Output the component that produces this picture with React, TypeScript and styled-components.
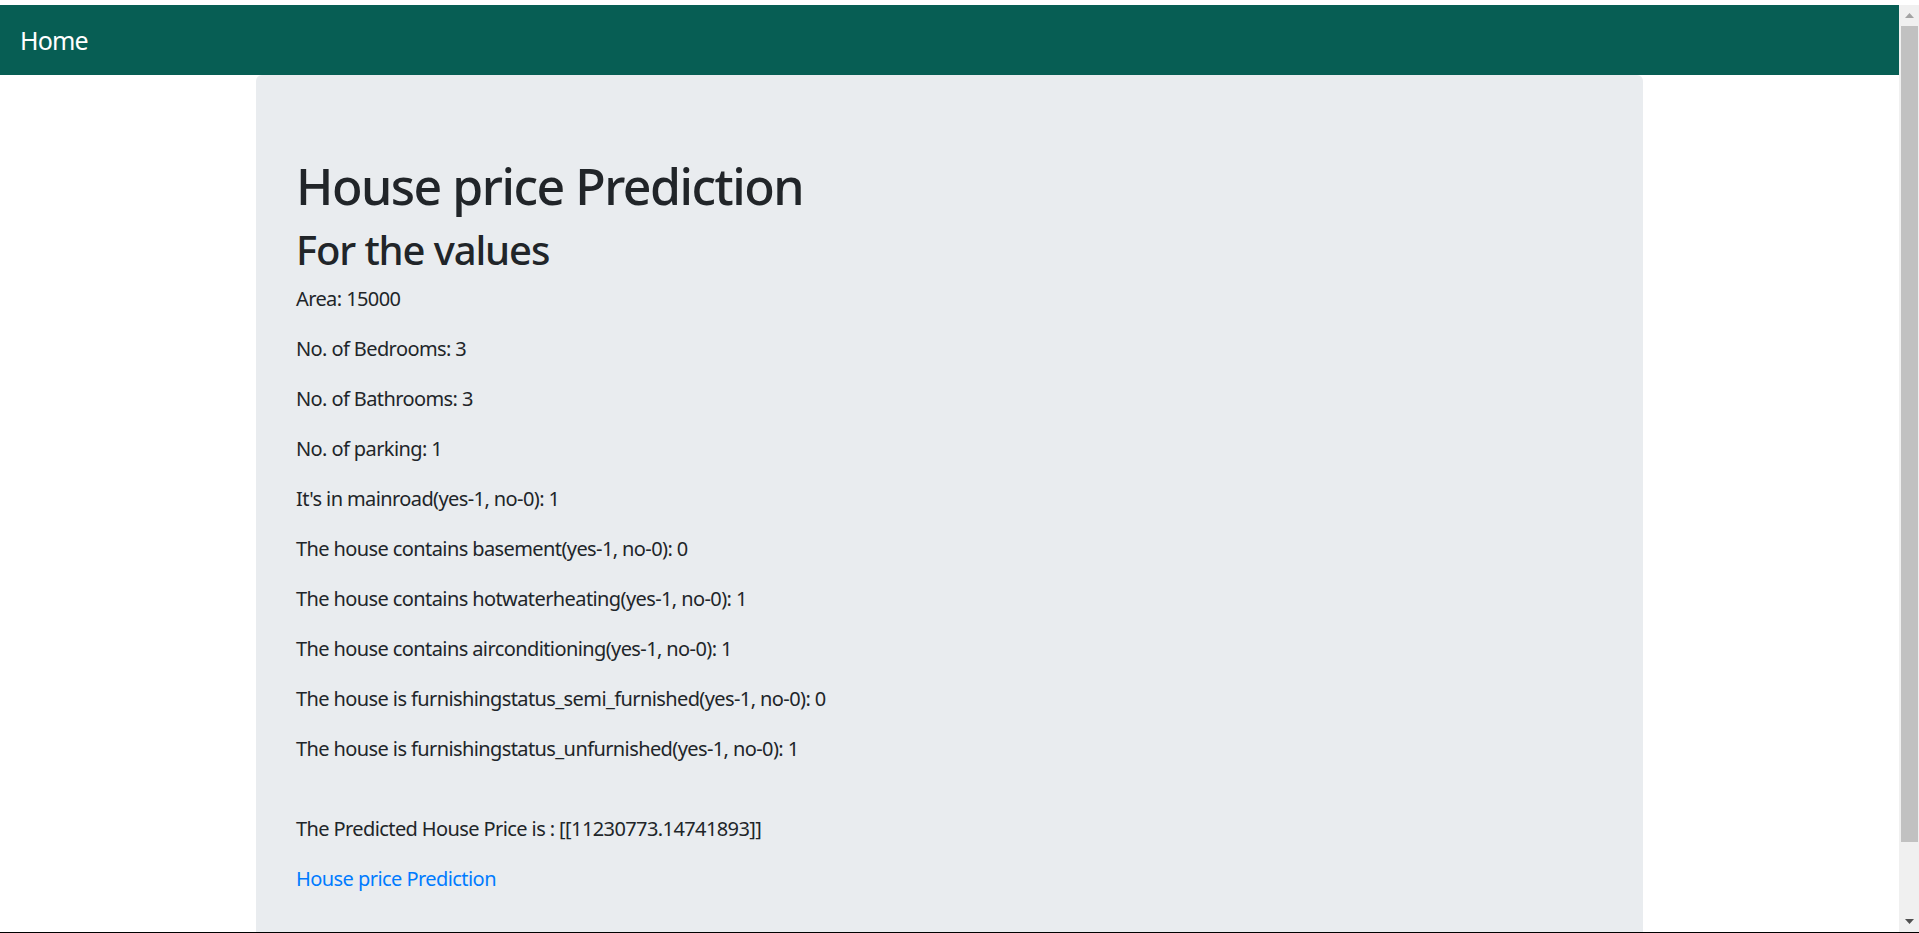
import React from "react";
import styled, { createGlobalStyle } from "styled-components";

const GlobalStyle = createGlobalStyle`
  html, body {
    margin: 0;
    padding: 0;
    height: 100%;
    overflow: hidden;
    background: #ffffff;
  }
  body {
    font-family: "Noto Sans", "Open Sans", Arial, sans-serif;
    color: #212529;
    letter-spacing: -0.024em;
  }
  * { box-sizing: border-box; }
`;

const Screen = styled.div`
  height: 100vh;
  display: flex;
  flex-direction: column;
  padding-top: 5px;
  border-bottom: 1px solid #000000;
`;

const Viewport = styled.div`
  flex: 1;
  min-height: 0;
  display: flex;
`;

const Page = styled.div`
  flex: 1;
  min-width: 0;
  overflow: hidden;
  display: flex;
  flex-direction: column;
`;

const Navbar = styled.nav`
  height: 70px;
  flex: none;
  background: #075e54;
  display: flex;
  align-items: center;
  padding: 2px 20px 0;
`;

const Brand = styled.a`
  color: #ffffff;
  font-size: 25px;
  line-height: 37.5px;
  letter-spacing: -0.035em;
  text-decoration: none;
`;

const Container = styled.main`
  width: 1387px;
  margin: 0 auto;
  flex: 1;
  display: flex;
  flex-direction: column;
`;

const Jumbotron = styled.section`
  flex: 1;
  background: #e9ecef;
  border-radius: 6px;
  padding: 81px 40px 80px;
`;

const Title = styled.h1`
  margin: 0 0 10px;
  font-size: 50px;
  line-height: 60px;
  font-weight: 500;
  letter-spacing: -0.03em;
`;

const Subtitle = styled.h2`
  margin: 0 0 10px;
  font-size: 40px;
  line-height: 48px;
  font-weight: 500;
  letter-spacing: -0.028em;
`;

const Field = styled.p`
  margin: 0 0 20px;
  font-size: 20px;
  line-height: 30px;
  letter-spacing: -0.03em;
`;

const Gap = styled.div`
  height: 30px;
`;

const BackLink = styled.a`
  color: #007bff;
  text-decoration: none;
  letter-spacing: -0.028em;
`;

const Scrollbar = styled.div`
  width: 20px;
  flex: none;
  background: #f0f0f0;
  display: flex;
  flex-direction: column;
`;

const ScrollButton = styled.div`
  height: 21px;
  flex: none;
  display: flex;
  align-items: center;
  justify-content: center;
`;

const Thumb = styled.div`
  height: 816px;
  flex: none;
  margin: 0 1px 0 2px;
  background: #c1c1c1;
`;

const TrackRest = styled.div`
  flex: 1;
`;

const Arrow = ({ up, color }: { up?: boolean; color: string }) => (
  <svg width="9" height="5" viewBox="0 0 9 5">
    <polygon points={up ? "4.5,0 9,5 0,5" : "0,0 9,0 4.5,5"} fill={color} />
  </svg>
);

const fields: [string, string][] = [
  ["Area", "15000"],
  ["No. of Bedrooms", "3"],
  ["No. of Bathrooms", "3"],
  ["No. of parking", "1"],
  ["It's in mainroad(yes-1, no-0)", "1"],
  ["The house contains basement(yes-1, no-0)", "0"],
  ["The house contains hotwaterheating(yes-1, no-0)", "1"],
  ["The house contains airconditioning(yes-1, no-0)", "1"],
  ["The house is furnishingstatus_semi_furnished(yes-1, no-0)", "0"],
  ["The house is furnishingstatus_unfurnished(yes-1, no-0)", "1"],
];

export default function App() {
  return (
    <>
      <GlobalStyle />
      <Screen>
        <Viewport>
          <Page>
            <Navbar>
              <Brand href="#">Home</Brand>
            </Navbar>
            <Container>
              <Jumbotron>
                <Title>House price Prediction</Title>
                <Subtitle>For the values</Subtitle>
                {fields.map(([label, value]) => (
                  <Field key={label}>
                    {label}: {value}
                  </Field>
                ))}
                <Gap />
                <Field>The Predicted House Price is : [[11230773.14741893]]</Field>
                <Field>
                  <BackLink href="#">House price Prediction</BackLink>
                </Field>
              </Jumbotron>
            </Container>
          </Page>
          <Scrollbar>
            <ScrollButton>
              <Arrow up color="#a3a3a3" />
            </ScrollButton>
            <Thumb />
            <TrackRest />
            <ScrollButton>
              <Arrow color="#505050" />
            </ScrollButton>
          </Scrollbar>
        </Viewport>
      </Screen>
    </>
  );
}
